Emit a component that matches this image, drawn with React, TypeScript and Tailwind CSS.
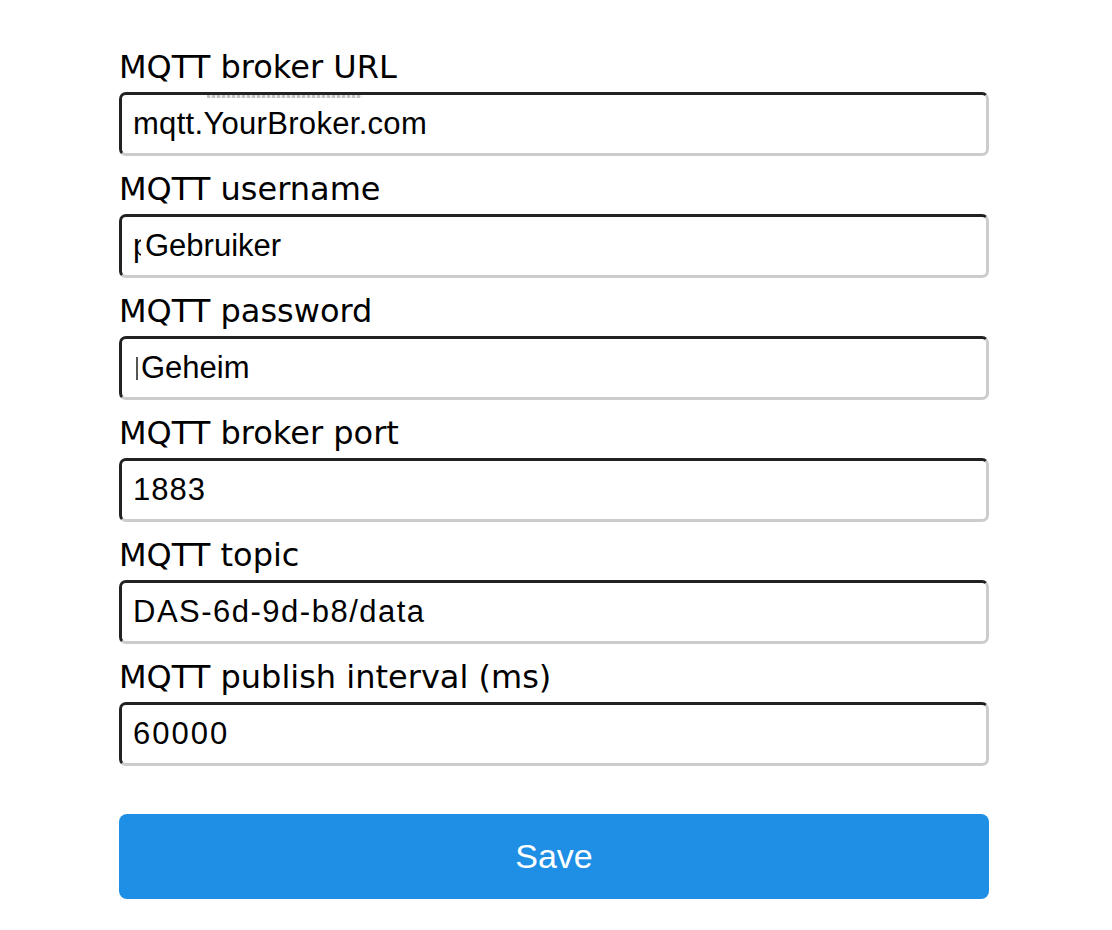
import React from "react";

interface FieldProps {
  label: string;
  children: React.ReactNode;
}

const labelFont = { fontFamily: '"DejaVu Sans", Verdana, sans-serif' };
const valueFont = { fontFamily: '"Liberation Sans", Arial, Helvetica, sans-serif' };

const Field: React.FC<FieldProps> = ({ label, children }) => {
  return (
    <div className="flex flex-col">
      <label
        className="block h-[36px] text-[32px] leading-[36px] text-black mb-[7px]"
        style={labelFont}
      >
        {label}
      </label>
      <div
        className="relative flex h-[64px] items-center overflow-hidden rounded-[7px] border-[3px] border-t-[#222222] border-l-[#222222] border-b-[#cccccc] border-r-[#cccccc] bg-white pl-[11px] text-[31px] text-black"
        style={valueFont}
      >
        {children}
      </div>
    </div>
  );
};

export default function App() {
  return (
    <div className="min-h-[930px] w-[1112px] bg-white">
      <div className="ml-[119px] w-[870px] pt-[49px]">
        <div className="flex flex-col gap-[15px]">
          <Field label="MQTT broker URL">
            <span className="absolute left-[85px] top-0 h-[3px] w-[155px] bg-[repeating-linear-gradient(90deg,#a8a8a8_0_3px,#e8e8e8_3px_5px)] opacity-70" />
            <span className="tracking-[0.3px]">mqtt.YourBroker.com</span>
          </Field>
          <Field label="MQTT username">
            <span className="inline-block w-[8px] overflow-hidden">p</span>
            <span className="ml-[4px]">Gebruiker</span>
          </Field>
          <Field label="MQTT password">
            <span className="ml-[3px] inline-block h-[23px] w-[2px] bg-[#555555]" />
            <span className="ml-[3px]">Geheim</span>
          </Field>
          <Field label="MQTT broker port">
            <span className="tracking-[1px]">1883</span>
          </Field>
          <Field label="MQTT topic">
            <span className="tracking-[1.5px]">DAS-6d-9d-b8/data</span>
          </Field>
          <Field label="MQTT publish interval (ms)">
            <span className="tracking-[2px]">60000</span>
          </Field>
        </div>
        <button
          type="button"
          className="mt-[48px] flex h-[85px] w-full items-center justify-center rounded-[8px] bg-[#1f8fe6] text-[34px] text-white"
          style={valueFont}
        >
          Save
        </button>
      </div>
    </div>
  );
}
